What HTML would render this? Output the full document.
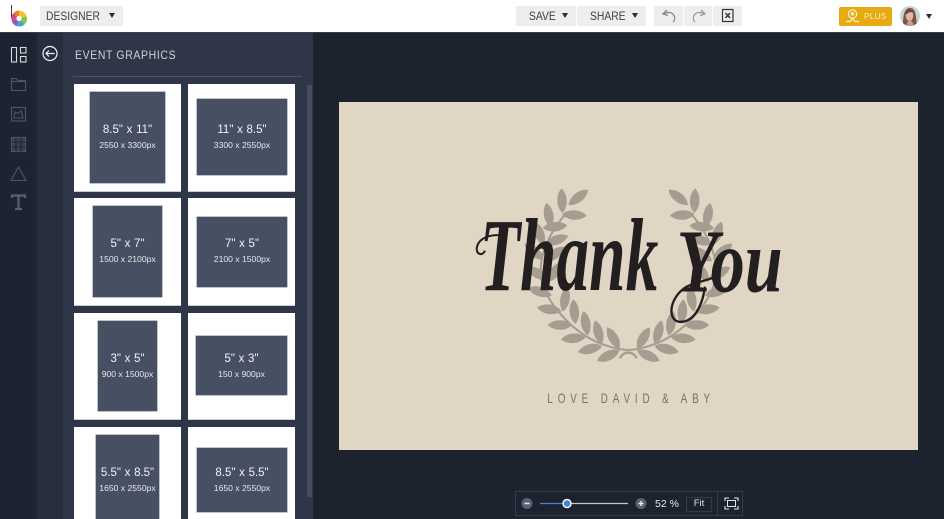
<!DOCTYPE html>
<html>
<head>
<meta charset="utf-8">
<style>
html,body{margin:0;padding:0;width:944px;height:519px;overflow:hidden;background:#1c232f;font-family:"Liberation Sans",sans-serif}
.a{position:absolute}
#hdr{left:0;top:0;width:944px;height:32px;background:#fff;border-bottom:1px solid #3a3f48;box-sizing:content-box}
.btn{position:absolute;background:#eeeeee;color:#3c4047;font-size:12px;line-height:20px;height:20px;top:6px}
.btn span{display:inline-block;transform:scaleX(.86);transform-origin:0 50%}
.car{position:absolute;width:0;height:0;border-left:3.5px solid transparent;border-right:3.5px solid transparent;border-top:5px solid #2a2d33}
.card{position:absolute;background:#fff;width:107px;height:107px;border-bottom:1px solid #c9ccd4}
.in{position:absolute;background:#474f62;color:#f2f3f5;text-align:center;box-shadow:0 0 0 .5px #7d8494}
.lb{position:absolute;left:0;right:0;font-size:11.5px;line-height:14px;word-spacing:.5px;white-space:nowrap}
.sb{position:absolute;left:0;right:0;font-size:8.6px;line-height:12px;white-space:nowrap;color:#e6e8ec}
</style>
</head>
<body>
<div class="a" id="hdr"></div>

<!-- logo -->
<svg class="a" style="left:8px;top:3px" width="22" height="26" viewBox="0 0 22 26">
<path d="M3.500 2V15" stroke="#3a3d45" stroke-width="1" fill="none"/>
<circle cx="11" cy="15.500" r="7.500" fill="#fff"/>
<path d="M11 15.500L11 7.500A8 8 0 0 1 18.500 13Z" fill="#f4c430"/>
<path d="M11 15.500L18.500 13A8 8 0 0 1 17 21Z" fill="#8cc63f"/>
<path d="M11 15.500L17 21A8 8 0 0 1 9 23.200Z" fill="#3fa9d6"/>
<path d="M11 15.500L9 23.200A8 8 0 0 1 3.500 17Z" fill="#8e5bb5"/>
<path d="M11 15.500L3.500 17A8 8 0 0 1 5.500 10Z" fill="#d8457f"/>
<path d="M11 15.500L5.500 10A8 8 0 0 1 11 7.500Z" fill="#ee7a2e"/>
<circle cx="11" cy="15.500" r="2.600" fill="#fff"/>
</svg>

<div class="btn" style="left:40px;width:83px;padding-left:6px;box-sizing:border-box"><span>DESIGNER</span></div>
<div class="car" style="left:109px;top:13px"></div>

<div class="btn" style="left:516px;width:60px;padding-left:12.500px;box-sizing:border-box"><span>SAVE</span></div>
<div class="car" style="left:562px;top:13px"></div>
<div class="btn" style="left:577px;width:69px;padding-left:13px;box-sizing:border-box"><span>SHARE</span></div>
<div class="car" style="left:632px;top:13px"></div>
<div class="btn" style="left:654px;width:29px"></div>
<div class="btn" style="left:684px;width:28px"></div>
<div class="btn" style="left:713px;width:29px"></div>
<svg class="a" style="left:654px;top:6px" width="88" height="20" viewBox="0 0 88 20">
<path d="M13 4L9 8L14 9.500M9.500 8C13 5.500 18 6 20 9.500C21.500 12 20.500 14.500 19 16" fill="none" stroke="#83868c" stroke-width="1.300"/>
<path d="M47 4L51 8L46 9.500M50.500 8C47 5.500 42 6 40 9.500C38.500 12 39.500 14.500 41 16" fill="none" stroke="#989ba0" stroke-width="1.300"/>
<path d="M68.500 3.500H79V15.500H68.500Z" fill="none" stroke="#33363c" stroke-width="1.200"/>
<path d="M71.500 7L76 12M76 7L71.500 12" stroke="#33363c" stroke-width="1.500"/>
</svg>

<div class="a" style="left:839px;top:7px;width:53px;height:19px;background:#e7ab12;border-radius:2px"></div>
<svg class="a" style="left:845px;top:8px" width="15" height="16" viewBox="0 0 15 16">
<circle cx="7.500" cy="6" r="4.200" fill="none" stroke="#fbeec4" stroke-width="1.200"/>
<circle cx="7.500" cy="5.800" r="1.800" fill="#fbeec4"/>
<path d="M1 13.500H5L7.500 10.500L10 13.500H14" fill="none" stroke="#fbeec4" stroke-width="1.300"/>
</svg>
<div class="a" style="left:864px;top:7px;font-size:8.600px;line-height:19px;color:#fbe9b8">PLUS</div>

<svg class="a" style="left:900px;top:6px" width="20" height="20" viewBox="0 0 20 20">
<defs><clipPath id="av"><circle cx="10" cy="10" r="10"/></clipPath></defs>
<g clip-path="url(#av)">
<rect width="20" height="20" fill="#c3d6d4"/>
<path d="M3 20C3 10 4 2 10 2C16 2 16 10 17 20Z" fill="#7c5545"/>
<ellipse cx="9.500" cy="9.500" rx="3.800" ry="5.500" fill="#dfb8a3"/>
<path d="M6 6C7 3 13 3 14 7C12 6 9 5 6 9Z" fill="#6b4637"/>
<path d="M6 20L8 15H12L14 20Z" fill="#c99c88"/>
</g>
</svg>
<div class="car" style="left:926px;top:14px"></div>

<!-- left columns -->
<div class="a" style="left:0;top:33px;width:37px;height:486px;background:#1d2431"></div>
<div class="a" style="left:37px;top:33px;width:26px;height:486px;background:#272f3f"></div>
<div class="a" style="left:63px;top:33px;width:250px;height:486px;background:#2e3648"></div>

<svg class="a" style="left:0;top:33px" width="63" height="190" viewBox="0 0 63 190">
<g fill="none">
<g stroke="#d5d9e0" stroke-width="1.100">
<rect x="11.500" y="14.500" width="5" height="14.500"/>
<rect x="20.500" y="14.500" width="5.500" height="5.500"/>
<rect x="20.500" y="23.500" width="5.500" height="5.500"/>
</g>
<g stroke="#4d5565" stroke-width="1.100">
<path d="M11.500 45.500V57.500H25.500V47.500H18L16.500 45.500Z"/>
<path d="M11.500 48.500H25.500"/>
<rect x="11.500" y="74.500" width="14" height="13.500"/>
<path d="M14 85L15 79L18 80.500L21 78L23 85Z"/>
<rect x="11.500" y="104.500" width="14" height="14" fill="#39414f"/>
<path d="M11.500 109H25.500M11.500 114H25.500M16 104.500V118.500M21 104.500V118.500" stroke="#1d2431"/>
<path d="M18.500 134L26 147.500H11Z"/>
</g>
<path d="M12 165V162.500H25V165M18.500 162.500V176M15 176H22" stroke="#58606f" stroke-width="2.200"/>
<circle cx="50" cy="20.500" r="7" stroke="#f0f2f5" stroke-width="1.200"/>
<path d="M54.500 20.500H46M49 17.500L46 20.500L49 23.500" stroke="#f0f2f5" stroke-width="1.200"/>
</g>
</svg>

<div class="a" style="left:75px;top:47px;font-size:12px;line-height:16px;letter-spacing:.75px;color:#cfd3da;transform:scaleX(.87);transform-origin:0 50%;white-space:nowrap">EVENT GRAPHICS</div>
<div class="a" style="left:73px;top:76px;width:229px;height:1px;background:#4a5264"></div>
<div class="a" style="left:307px;top:85px;width:5px;height:412px;background:#444c60"></div>

<!-- cards -->
<div class="card" style="left:74px;top:84px"><div class="in" style="left:16px;top:8px;width:75px;height:91px"><div class="lb" style="top:31px">8.5" x 11"</div><div class="sb" style="top:47px">2550 x 3300px</div></div></div>
<div class="card" style="left:188px;top:84px"><div class="in" style="left:9px;top:15px;width:90px;height:76px"><div class="lb" style="top:24px">11" x 8.5"</div><div class="sb" style="top:40px">3300 x 2550px</div></div></div>
<div class="card" style="left:74px;top:198px"><div class="in" style="left:19px;top:8px;width:69px;height:91px"><div class="lb" style="top:31px">5" x 7"</div><div class="sb" style="top:47px">1500 x 2100px</div></div></div>
<div class="card" style="left:188px;top:198px"><div class="in" style="left:9px;top:19px;width:90px;height:70px"><div class="lb" style="top:20px">7" x 5"</div><div class="sb" style="top:36px">2100 x 1500px</div></div></div>
<div class="card" style="left:74px;top:313px;height:106px"><div class="in" style="left:24px;top:8px;width:59px;height:90px"><div class="lb" style="top:31px">3" x 5"</div><div class="sb" style="top:47px">900 x 1500px</div></div></div>
<div class="card" style="left:188px;top:313px;height:106px"><div class="in" style="left:8px;top:23px;width:91px;height:59px"><div class="lb" style="top:16px">5" x 3"</div><div class="sb" style="top:32px">150 x 900px</div></div></div>
<div class="card" style="left:74px;top:427px;height:92px;border:0"><div class="in" style="left:22px;top:8px;width:63px;height:84px"><div class="lb" style="top:31px">5.5" x 8.5"</div><div class="sb" style="top:47px">1650 x 2550px</div></div></div>
<div class="card" style="left:188px;top:427px;height:92px;border:0"><div class="in" style="left:9px;top:21px;width:90px;height:64px"><div class="lb" style="top:18px">8.5" x 5.5"</div><div class="sb" style="top:34px">1650 x 2550px</div></div></div>

<!-- canvas -->
<div class="a" style="left:339px;top:102px;width:579px;height:348px;background:#e1d5c4"></div>
<svg class="a" style="left:460px;top:180px" width="340" height="230" viewBox="0 0 1020 690">
<defs>
<path id="lf" d="M-37 0C-18 -19 18 -19 37 0C18 19 -18 19 -37 0Z"/>
<g id="half">
<path d="M322 95C262 165 225 245 250 320C275 385 345 460 420 490C455 503 485 510 505 510" fill="none" stroke="#a59d90" stroke-width="6"/>
<use href="#lf" transform="translate(306 62) rotate(88)"/>
<use href="#lf" transform="translate(355 52) rotate(-38)"/>
<use href="#lf" transform="translate(266 105) rotate(80)"/>
<use href="#lf" transform="translate(343 105) rotate(3)"/>
<use href="#lf" transform="translate(238 160) rotate(70)"/>
<use href="#lf" transform="translate(285 140) rotate(-6)"/>
<use href="#lf" transform="translate(290 180) rotate(-20)"/>
<use href="#lf" transform="translate(222 215) rotate(40)"/>
<use href="#lf" transform="translate(285 222) rotate(-35)"/>
<use href="#lf" transform="translate(232 280) rotate(30)"/>
<use href="#lf" transform="translate(285 275) rotate(-55)"/>
<use href="#lf" transform="translate(240 335) rotate(18)"/>
<use href="#lf" transform="translate(315 358) rotate(-80)"/>
<use href="#lf" transform="translate(268 388) rotate(8)"/>
<use href="#lf" transform="translate(343 395) rotate(85)"/>
<use href="#lf" transform="translate(300 435)"/>
<use href="#lf" transform="translate(377 430) rotate(80)"/>
<use href="#lf" transform="translate(340 475) rotate(-5)"/>
<use href="#lf" transform="translate(415 457) rotate(75)"/>
<use href="#lf" transform="translate(390 507) rotate(-14)"/>
<use href="#lf" transform="translate(460 474) rotate(60)"/>
<use href="#lf" transform="translate(445 527) rotate(-25)"/>
</g>
</defs>
<g fill="#a59d90">
<use href="#half"/>
<use href="#half" transform="translate(1010 0) scale(-1 1)"/>
<path d="M480 535C490 512 520 512 530 535" fill="none" stroke="#a59d90" stroke-width="7"/>
</g>
<text x="60" y="330" font-family="Liberation Serif,serif" font-style="italic" font-weight="700" font-size="310" fill="#231f20" textLength="535" lengthAdjust="spacingAndGlyphs">Thank</text>
<text x="650" y="335" font-family="Liberation Serif,serif" font-style="italic" font-weight="700" font-size="270" fill="#231f20" textLength="318" lengthAdjust="spacingAndGlyphs">You</text>
<!-- decorative flourishes -->
<path d="M135 168C100 160 55 170 50 205C50 225 68 228 75 212" fill="none" stroke="#231f20" stroke-width="6"/>
<path d="M735 320C725 390 695 430 655 425C620 415 630 350 680 320C710 305 750 300 780 285" fill="none" stroke="#231f20" stroke-width="7"/>
<text transform="scale(.72 1)" x="364" y="669" font-family="Liberation Sans,sans-serif" font-size="41" fill="#75706a" textLength="678" lengthAdjust="spacing">LOVE DAVID &amp; ABY</text>
</svg>

<!-- zoom bar -->
<div class="a" style="left:515px;top:491px;width:228px;height:25px;border:1px solid #343c4c;box-sizing:border-box"></div>
<div class="a" style="left:717px;top:491px;width:1px;height:25px;background:#343c4c"></div>
<svg class="a" style="left:515px;top:491px" width="228" height="25" viewBox="0 0 228 25">
<circle cx="12" cy="12.500" r="5.500" fill="#5a6272"/><path d="M9.500 12.500H14.500" stroke="#e8eaee" stroke-width="1.500"/>
<path d="M25 12.500H52" stroke="#3f86d8" stroke-width="1.200"/>
<path d="M52 12.500H113" stroke="#c4c7cc" stroke-width="1.200"/>
<circle cx="52" cy="12.500" r="4" fill="#3f86d8" stroke="#fff" stroke-width="1.400"/>
<circle cx="126" cy="12.500" r="5.500" fill="#5a6272"/><path d="M123.500 12.500H128.500M126 10V15" stroke="#e8eaee" stroke-width="1.500"/>
<rect x="171.500" y="6.500" width="25" height="14" fill="none" stroke="#343c4c"/>
<path d="M210 10V7H214M219 7H223V10M210 15V18H214M219 18H223V15" fill="none" stroke="#e4e6ea" stroke-width="1.100"/>
<rect x="212.500" y="9.500" width="8" height="6" fill="none" stroke="#e4e6ea"/>
</svg>
<div class="a" style="left:655px;top:497px;font-size:10.500px;line-height:14px;color:#e6e8ec;white-space:nowrap">52 %</div>
<div class="a" style="left:686px;top:497px;width:26px;text-align:center;font-size:9.500px;line-height:14px;color:#dfe2e6">Fit</div>
</body>
</html>
